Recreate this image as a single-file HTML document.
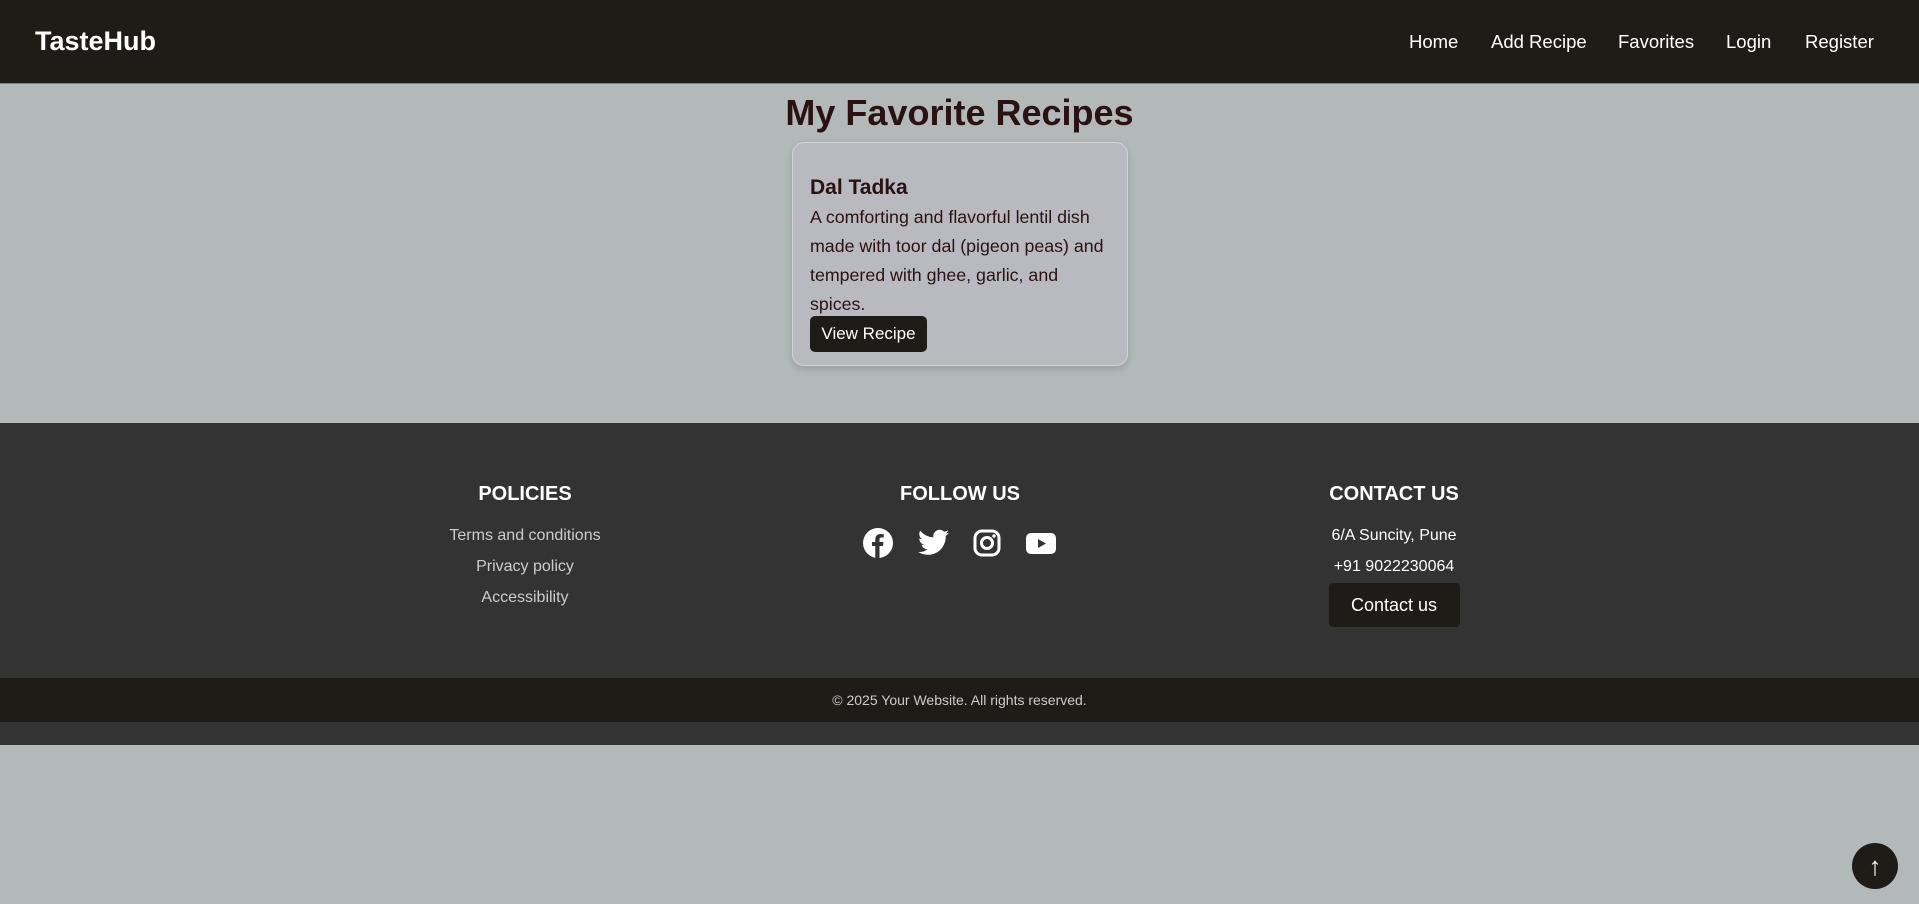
<!DOCTYPE html>
<html><head><meta charset="utf-8"><style>
*{margin:0;padding:0;box-sizing:border-box}
body{width:1919px;height:904px;background:#b3b9b8;font-family:"Liberation Sans",Arial,sans-serif;position:relative;overflow:hidden}
.nav{position:absolute;left:0;top:0;width:1919px;height:84px;background:#1f1c17;border-bottom:1px solid #8c8371}
.logo{position:absolute;left:35px;top:26px;color:#fff;font-weight:bold;font-size:27px}
.nl{position:absolute;top:31px;color:#fff;font-size:18.5px}
h1{position:absolute;left:0;width:1919px;top:92px;text-align:center;color:#2a1212;font-size:36px;font-weight:bold}
.card{position:absolute;left:792px;top:142px;width:336px;height:224px;background:#b9babf;border:1px solid #d3d3d6;border-radius:12px;box-shadow:0 3px 8px rgba(0,0,0,.15)}
.card h3{position:absolute;left:17px;top:33px;font-size:21px;color:#2a1212}
.card p{position:absolute;left:17px;top:60px;width:308px;font-size:17.8px;line-height:29px;color:#2a1212}
.btn{position:absolute;left:17px;top:173px;width:117px;height:36px;background:#1f1c17;border-radius:5px;color:#fff;font-size:17px;line-height:36px;text-align:center}
.footer{position:absolute;left:0;top:423px;width:1919px;height:255px;background:#333}
.col{position:absolute;width:300px;text-align:center;color:#ccc;font-size:16px}
.col h4{color:#fff;font-size:20px;margin-bottom:14px;height:24px;line-height:24px}
.col div{height:31px;line-height:31px}
.bar{position:absolute;left:0;top:678px;width:1919px;height:44px;background:#1f1c17;color:#ccc;font-size:14px;text-align:center;line-height:44px}
.strip{position:absolute;left:0;top:722px;width:1919px;height:23px;background:#333}
.up{position:absolute;left:1852px;top:843px;width:46px;height:46px;border-radius:50%;background:#1f1c17;color:#fff;text-align:center;line-height:46px;font-size:26px}
svg{position:absolute}
</style></head><body>
<div class="nav"><div class="logo">TasteHub</div>
<span class="nl" style="left:1409px">Home</span><span class="nl" style="left:1491px">Add Recipe</span><span class="nl" style="left:1618px">Favorites</span><span class="nl" style="left:1726px">Login</span><span class="nl" style="left:1805px">Register</span></div>
<h1>My Favorite Recipes</h1>
<div class="card"><h3>Dal Tadka</h3><p>A comforting and flavorful lentil dish made with toor dal (pigeon peas) and tempered with ghee, garlic, and spices.</p><div class="btn">View Recipe</div></div>
<div class="footer">
<div class="col" style="left:375px;top:59px"><h4>POLICIES</h4><div>Terms and conditions</div><div>Privacy policy</div><div>Accessibility</div></div>
<div class="col" style="left:810px;top:59px"><h4>FOLLOW US</h4></div>
<div class="col" style="left:1244px;top:59px;color:#fff"><h4>CONTACT US</h4><div>6/A Suncity, Pune</div><div>+91 9022230064</div>
<div style="margin:1px auto 0;width:131px;height:44px;line-height:44px;background:#1f1c17;border-radius:4px;font-size:18px">Contact us</div></div>
</div>
<svg style="left:863px;top:528px" width="30" height="30" viewBox="0 0 30 30"><circle cx="15" cy="15" r="15" fill="#fff"/><path d="M16.5 30V18h3.5l.5-4h-4v-2.5c0-1.2.4-2 2-2h2.2V6.2c-.4 0-1.7-.2-3.2-.2-3.2 0-5.2 1.9-5.2 5.4V14H9v4h3.3v12z" fill="#333"/></svg>
<svg style="left:918px;top:529px" width="31" height="27" viewBox="0 0 24 20"><path d="M24 2.4c-.9.4-1.8.6-2.8.8 1-.6 1.8-1.6 2.2-2.7-1 .6-2 1-3.1 1.2A4.9 4.9 0 0 0 11.9 6 14 14 0 0 1 1.7.9a4.9 4.9 0 0 0 1.5 6.6c-.8 0-1.600-.3-2.2-.6 0 2.4 1.7 4.4 3.9 4.8-.7.2-1.5.2-2.2.1.6 2 2.4 3.4 4.600 3.4A9.9 9.9 0 0 1 0 17.3 14 14 0 0 0 7.5 19.5c9.1 0 14-7.5 14-14v-.6c1-.7 1.8-1.6 2.5-2.5z" fill="#fff"/></svg>
<svg style="left:973px;top:529px" width="28" height="28" viewBox="0 0 28 28"><rect x="2" y="2" width="24" height="24" rx="7" fill="none" stroke="#fff" stroke-width="3"/><circle cx="14" cy="14" r="5.5" fill="none" stroke="#fff" stroke-width="3"/><circle cx="21" cy="7" r="1.7" fill="#fff"/></svg>
<svg style="left:1026px;top:533px" width="30" height="21" viewBox="0 0 30 21"><rect width="30" height="21" rx="5" fill="#fff"/><path d="M12 6v9l8-4.5z" fill="#333"/></svg>
<div class="bar">© 2025 Your Website. All rights reserved.</div>
<div class="strip"></div>
<div class="up">↑</div>
</body></html>
